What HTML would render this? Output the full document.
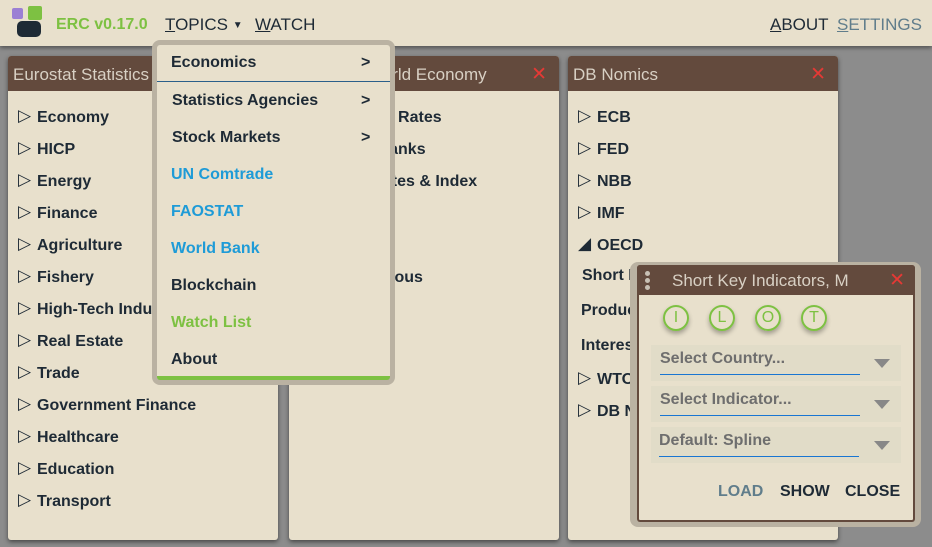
<!DOCTYPE html>
<html><head><meta charset="utf-8"><style>
*{box-sizing:border-box;margin:0;padding:0}
body{width:932px;height:547px;background:#8c8c8c;font-family:"Liberation Sans",sans-serif;position:relative;overflow:hidden}
.top{position:absolute;left:0;top:0;width:932px;height:46px;background:#e8e0cc;box-shadow:0 2px 4px rgba(0,0,0,.4)}
.nav{position:absolute;top:15px;font-size:17px;color:#1e2a35}
.panel{position:absolute;top:56px;width:270px;height:484px;background:#e8e0cc;border-radius:3px;box-shadow:0 2px 5px rgba(0,0,0,.5)}
.ph{height:35px;background:#634a3d;color:#d8d0c4;font-size:17px;padding:9px 5px;border-radius:3px 3px 0 0;position:relative}
.x{position:absolute;right:12px;top:7px;color:#e53935;font-size:19px}
.it{position:absolute;left:10px;font-size:16px;font-weight:bold;color:#1e2a35;white-space:nowrap}
.it span{font-weight:normal;font-size:17px;display:inline-block;width:19px;position:relative;top:-1px}
.dd{position:absolute;left:152px;top:40px;width:243px;height:345px;background:#bab2a2;border-radius:8px}
.ddi{position:absolute;left:5px;top:5px;width:233px;height:335px;background:#e8e0cc;border-bottom:4px solid #7dc142;border-radius:3px}
.m{position:absolute;left:14px;font-size:16px;font-weight:bold;color:#1e2a35}
.m b{position:absolute;left:190px}
.pop{position:absolute;left:630px;top:262px;width:291px;height:265px;background:#bab2a2;border-radius:8px}
.pi{position:absolute;left:7px;top:3px;width:278px;height:257px;background:#e8e0cc;border:2px solid #634a3d;border-top:none;border-radius:3px}
.c{position:absolute;top:40px;width:26px;height:26px;border:2px solid #7dc142;border-radius:50%;color:#7dc142;font-size:16px;text-align:center;line-height:22px;box-shadow:0 3px 5px rgba(0,0,0,.3)}
.sel{position:absolute;left:12px;width:250px;height:36px;background:#e1dcc8}
.sel div{position:absolute;left:9px;top:5px;width:200px;height:25px;border-bottom:1px solid #1976d2;font-size:16px;font-weight:bold;color:#6e6e6e}
.sel i{position:absolute;right:11px;top:14px;border-left:8px solid transparent;border-right:8px solid transparent;border-top:9px solid #888}
</style></head><body>
<div class="top">
 <div style="position:absolute;left:12px;top:8px;width:11px;height:11px;background:#9b7fd4;border-radius:2px"></div>
 <div style="position:absolute;left:28px;top:6px;width:14px;height:14px;background:#7dc142;border-radius:2px"></div>
 <div style="position:absolute;left:17px;top:21px;width:24px;height:16px;background:#1e2a35;border-radius:5px"></div>
 <div class="nav" style="left:56px;color:#7dc142;font-weight:bold;font-size:16px;top:16px">ERC v0.17.0</div>
 <div class="nav" style="left:165px"><u>T</u>OPICS <span style="font-size:10px;position:relative;top:-2px">▼</span></div>
 <div class="nav" style="left:255px"><u>W</u>ATCH</div>
 <div class="nav" style="left:770px"><u>A</u>BOUT</div>
 <div class="nav" style="right:10px;color:#607d8b"><u>S</u>ETTINGS</div>
</div>
<div class="panel" style="left:8px"><div class="ph">Eurostat Statistics</div>
<div class="it" style="top:51px"><span>▷</span>Economy</div>
<div class="it" style="top:83px"><span>▷</span>HICP</div>
<div class="it" style="top:115px"><span>▷</span>Energy</div>
<div class="it" style="top:147px"><span>▷</span>Finance</div>
<div class="it" style="top:179px"><span>▷</span>Agriculture</div>
<div class="it" style="top:211px"><span>▷</span>Fishery</div>
<div class="it" style="top:243px"><span>▷</span>High-Tech Industry</div>
<div class="it" style="top:275px"><span>▷</span>Real Estate</div>
<div class="it" style="top:307px"><span>▷</span>Trade</div>
<div class="it" style="top:339px"><span>▷</span>Government Finance</div>
<div class="it" style="top:371px"><span>▷</span>Healthcare</div>
<div class="it" style="top:403px"><span>▷</span>Education</div>
<div class="it" style="top:435px"><span>▷</span>Transport</div>
</div>
<div class="panel" style="left:289px"><div class="ph" style="padding-left:78px">World Economy<span class="x">✕</span></div>
<div class="it" style="top:51px"><span>▷</span>Exchange Rates</div>
<div class="it" style="top:83px"><span>▷</span>Central Banks</div>
<div class="it" style="top:115px"><span>▷</span>Commodites &amp; Index</div>
<div class="it" style="top:147px"><span>▷</span>Security</div>
<div class="it" style="top:211px"><span>▷</span>Miscelaneous</div>
</div>
<div class="panel" style="left:568px"><div class="ph">DB Nomics<span class="x">✕</span></div>
<div class="it" style="top:51px"><span>▷</span>ECB</div>
<div class="it" style="top:83px"><span>▷</span>FED</div>
<div class="it" style="top:115px"><span>▷</span>NBB</div>
<div class="it" style="top:147px"><span>▷</span>IMF</div>
<div class="it" style="top:179px"><span>◢</span>OECD</div>
<div class="it" style="top:211px;left:14px">Short Key Indicators</div>
<div class="it" style="top:246px;left:13px">Production</div>
<div class="it" style="top:281px;left:13px">Interest Rates</div>
<div class="it" style="top:313px"><span>▷</span>WTO</div>
<div class="it" style="top:345px"><span>▷</span>DB Nomics</div>
</div>
<div class="dd"><div class="ddi">
<div class="m" style="top:9px">Economics<b>&gt;</b></div>
<div style="position:absolute;left:0;top:36px;width:233px;height:1px;background:#2b5f8a"></div>
<div class="m" style="top:47px;left:15px">Statistics Agencies<b style="left:189px">&gt;</b></div>
<div class="m" style="top:84px;left:15px">Stock Markets<b style="left:189px">&gt;</b></div>
<div class="m" style="top:121px;color:#1e9bd7">UN Comtrade</div>
<div class="m" style="top:158px;color:#1e9bd7">FAOSTAT</div>
<div class="m" style="top:195px;color:#1e9bd7">World Bank</div>
<div class="m" style="top:232px">Blockchain</div>
<div class="m" style="top:269px;color:#7dc142">Watch List</div>
<div class="m" style="top:306px">About</div>
</div></div>
<div class="pop"><div class="pi">
<div style="position:absolute;left:-2px;top:0;width:278px;height:30px;background:#634a3d;border-radius:3px 3px 0 0">
 <div style="position:absolute;left:8px;top:6px;width:5px;height:5px;border-radius:50%;background:#c8c0b4;box-shadow:0 7px 0 #c8c0b4,0 14px 0 #c8c0b4"></div>
 <div style="position:absolute;left:35px;top:6px;color:#d8d0c4;font-size:17px">Short Key Indicators, M</div>
 <div style="position:absolute;right:10px;top:4px;color:#e53935;font-size:19px">✕</div>
</div>
<div class="c" style="left:24px">I</div>
<div class="c" style="left:70px">L</div>
<div class="c" style="left:116px">O</div>
<div class="c" style="left:162px">T</div>
<div class="sel" style="top:80px"><div>Select Country...</div><i></i></div>
<div class="sel" style="top:121px"><div>Select Indicator...</div><i></i></div>
<div class="sel" style="top:162px"><div style="left:8px">Default: Spline</div><i></i></div>
<div style="position:absolute;left:79px;top:218px;font-size:16px;font-weight:bold;color:#607d8b">LOAD</div>
<div style="position:absolute;left:141px;top:218px;font-size:16px;font-weight:bold;color:#1e2a35">SHOW</div>
<div style="position:absolute;left:206px;top:218px;font-size:16px;font-weight:bold;color:#1e2a35">CLOSE</div>
</div></div>
</body></html>
